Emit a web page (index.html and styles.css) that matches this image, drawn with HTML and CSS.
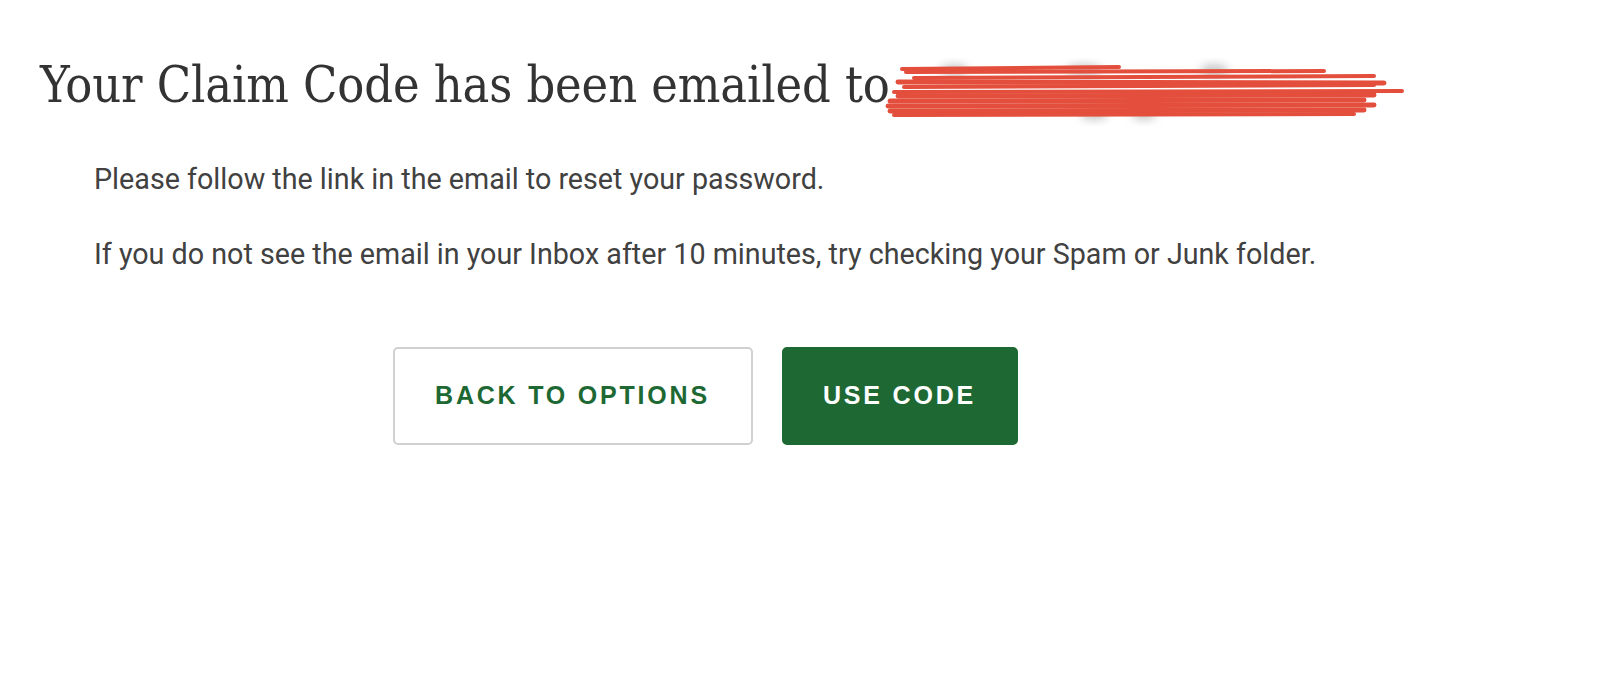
FILE: index.html
```html
<!DOCTYPE html>
<html lang="en">
<head>
<meta charset="utf-8">
<title>Claim Code</title>
<link rel="stylesheet" href="styles.css">
</head>
<body>
<main class="page">
  <h1 class="title">Your Claim Code has been emailed to<svg class="redact" width="520" height="56" viewBox="0 0 520 56" aria-hidden="true">
    <defs><filter id="b"><feGaussianBlur stdDeviation="4"/></filter></defs>
    <g filter="url(#b)" fill="#c8c8c8"><ellipse cx="70" cy="6" rx="14" ry="6"/><ellipse cx="200" cy="6" rx="18" ry="6"/><ellipse cx="330" cy="6" rx="14" ry="6"/><ellipse cx="210" cy="50" rx="14" ry="6"/><ellipse cx="260" cy="50" rx="12" ry="6"/></g>
    <g stroke="#e34f3c" stroke-linecap="round" fill="none">
      <path d="M18 5 L235 3" stroke-width="4"/>
      <path d="M22 8 L440 7" stroke-width="4"/>
      <path d="M30 14 L490 12" stroke-width="4"/>
      <path d="M14 18 L500 19" stroke-width="5"/>
      <path d="M20 23 L490 21" stroke-width="4"/>
      <path d="M10 28 L518 27" stroke-width="4"/>
      <path d="M14 32 L490 31" stroke-width="5"/>
      <path d="M6 37 L480 36" stroke-width="5"/>
      <path d="M4 42 L490 41" stroke-width="5"/>
      <path d="M6 47 L480 46" stroke-width="5"/>
      <path d="M10 51 L470 50" stroke-width="4"/>
    </g>
  </svg></h1>
  <div class="body">
    <p class="text">Please follow the link in the email to reset your password.</p>
    <p class="text">If you do not see the email in your Inbox after 10 minutes, try checking your Spam or Junk folder.</p>
  </div>
  <div class="actions">
    <button class="btn btn-outline" type="button">BACK TO OPTIONS</button>
    <button class="btn btn-solid" type="button">USE CODE</button>
  </div>
</main>
</body>
</html>
```
FILE: styles.css
```css
html, body {
  margin: 0;
  padding: 0;
  background: #ffffff;
}
.page {
  width: 1330px;
  padding: 50px 0 0 40px;
}
.title {
  margin: 0;
  font-family: "DejaVu Serif Condensed", "DejaVu Serif", "Liberation Serif", serif;
  font-stretch: condensed;
  font-weight: normal;
  font-size: 50px;
  line-height: 70px;
  color: #333333;
  white-space: nowrap;
  letter-spacing: -0.1px;
}
.redact {
  vertical-align: -18px;
  margin-left: -6px;
  overflow: visible;
}
.body {
  padding: 41px 0 0 54px;
}
.text {
  margin: 0 0 39px;
  font-family: Roboto, "Liberation Sans", sans-serif;
  font-size: 28.7px;
  line-height: 36px;
  color: #414141;
}
.actions {
  display: flex;
  justify-content: center;
  gap: 29px;
  padding-top: 36px;
}
.btn {
  height: 98px;
  padding-bottom: 3px;
  border-radius: 5px;
  font-family: "Liberation Sans", Arial, sans-serif;
  font-weight: bold;
  font-size: 25px;
  letter-spacing: 2.8px;
  cursor: pointer;
}
.btn-outline {
  width: 360px;
  background: #ffffff;
  border: 2px solid #d0d0d0;
  color: #1d6833;
}
.btn-solid {
  width: 236px;
  background: #1d6833;
  border: 2px solid #1d6833;
  color: #ffffff;
}
```
